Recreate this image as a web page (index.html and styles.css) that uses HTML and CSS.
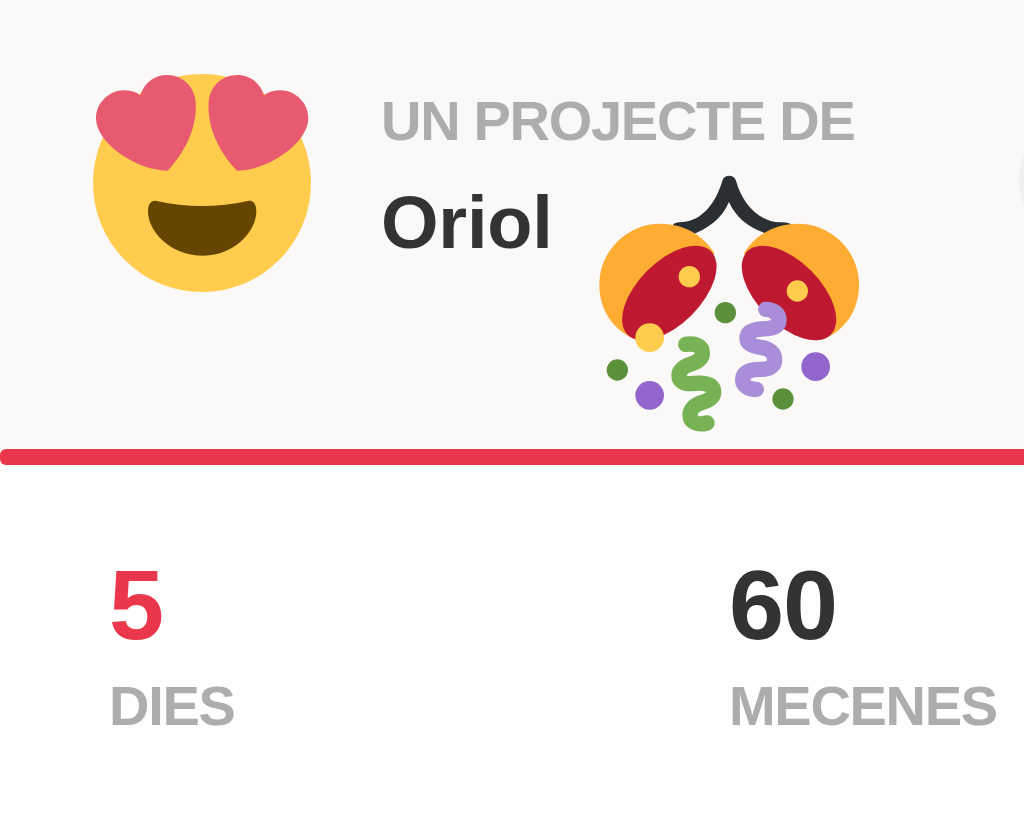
FILE: index.html
```html
<!DOCTYPE html>
<html lang="ca">
  <head>
    <meta charset="UTF-8" />
    <meta name="viewport" content="width=device-width, initial-scale=1.0" />
    <title>Projecte</title>
    <link rel="stylesheet" href="styles.css">
  </head>
  <body>
    <header class="project">
      <svg class="avatar" viewBox="0 0 735 735">
        <circle cx="366" cy="369" r="327" fill="#ffcc4d" />
        <path fill="#e75a70" d="M263 332C170 332 48 250 48 175C48 130 86 91 132 91C151 91 169 96 181 106C193 67 225 45 261 45C308 45 343 80 347 125C353 210 308 284 263 332Z" />
        <path fill="#e75a70" d="M471 332C563 332 685 250 685 175C685 130 647 91 601 91C582 91 564 96 552 106C540 67 508 45 472 45C425 45 390 80 386 125C380 210 425 284 471 332Z" />
        <path fill="#664500" d="M230 423C320 443 412 443 503 423C520 420 529 433 529 454C529 515 462 587 367 587C272 587 204 515 204 454C204 433 213 420 230 423Z" />
      </svg>

      <div class="author">
        <p class="label">UN PROJECTE DE</p>
        <h1 class="name">Oriol</h1>
      </div>

      <svg class="confetti" viewBox="0 0 840 840">
        <path fill="#292f33" d="M397 47C402 27 433 27 438 47C457 116 507 171 570 172Q597 170 606 181L540 210C480 190 440 162 417 111C395 162 355 190 300 212L248 181Q253 171 279 171C335 166 377 116 397 47Z" />
        <path fill="#ffac33" d="M137 523C72 500 28 435 28 360C28 258 110 176 212 176C278 176 340 209 373 265Z" />
        <path fill="#ffac33" d="M698 523C763 500 807 435 807 360C807 258 725 176 623 176C557 176 495 209 462 265Z" />
        <ellipse cx="238" cy="384" rx="177" ry="94" transform="rotate(-45 238 384)" fill="#be1931" />
        <ellipse cx="597" cy="384" rx="177" ry="94" transform="rotate(45 597 384)" fill="#be1931" />
        <path class="streamer" stroke="#77b255" d="M287 538C318 534 337 543 337 564C337 582 322 591 303 597C282 604 267 614 267 632C267 649 283 657 303 656C340 652 371 655 371 682C371 700 352 708 335 713C315 719 300 732 300 751C300 771 322 782 351 774" />
        <path class="streamer" stroke="#aa8dd8" d="M527 433C552 433 567 446 567 465C567 490 540 490 515 492C488 494 471 502 471 520C471 538 488 544 512 547C537 550 554 563 554 585C554 606 535 613 510 613C480 613 459 622 458 642C457 662 475 674 499 673" />
        <circle cx="298" cy="335" r="32" fill="#ffcc4d" />
        <circle cx="622" cy="378" r="32" fill="#ffcc4d" />
        <circle cx="179" cy="518" r="43" fill="#ffcc4d" />
        <circle cx="406" cy="443" r="32" fill="#5c913b" />
        <circle cx="82" cy="615" r="32" fill="#5c913b" />
        <circle cx="579" cy="702" r="32" fill="#5c913b" />
        <circle cx="179" cy="691" r="43" fill="#9266cc" />
        <circle cx="677" cy="605" r="43" fill="#9266cc" />
      </svg>

      <div class="badge"></div>
    </header>

    <div class="progress"></div>

    <section class="stats">
      <div class="stat">
        <p class="value days">5</p>
        <p class="label">DIES</p>
      </div>
      <div class="stat">
        <p class="value">60</p>
        <p class="label">MECENES</p>
      </div>
    </section>
  </body>
</html>
```

FILE: styles.css
```css
* {
  box-sizing: border-box;
}

body {
  margin: 0;
  height: 839px;
  overflow: hidden;
  background-color: #fefefe;
  font-family: "Liberation Sans", Arial, sans-serif;
  color: #333;
}

.project {
  position: relative;
  display: flex;
  align-items: flex-start;
  height: 457px;
  padding: 60px 0 0 80px;
  overflow: hidden;
  background-color: #faf9f7;
}

.avatar {
  flex: none;
  width: 245px;
  height: 245px;
}

.author {
  flex: none;
  width: 638px;
  margin: 33px 0 0 56px;
}

p,
h1 {
  margin: 0;
  font-weight: bold;
  white-space: nowrap;
}

.label {
  font-size: 56px;
  line-height: 56px;
  letter-spacing: -1.3px;
  color: #adadad;
}

.name {
  margin-top: 37px;
  font-size: 74px;
  line-height: 74px;
  letter-spacing: -0.2px;
}

/* sits on top of the author block */
.confetti {
  position: absolute;
  top: 165px;
  left: 590px;
  width: 280px;
  height: 280px;
}

.streamer {
  fill: none;
  stroke-width: 46;
  stroke-linecap: round;
  stroke-linejoin: round;
}

.badge {
  flex: none;
  width: 130px;
  height: 130px;
  margin-top: 55px;
  border-radius: 50%;
  background-color: #efeff0;
}

.progress {
  position: relative;
  height: 16px;
  margin-top: -8px;
  border-radius: 6px 0 0 6px;
  background-color: #eb374b;
}

.stats {
  display: grid;
  grid-template-columns: 620px 1fr;
  padding: 90px 0 0 109px;
}

.value {
  margin-bottom: 24px;
  font-size: 99px;
  line-height: 99px;
  letter-spacing: -1px;
}

.days {
  color: #eb374b;
}
```
